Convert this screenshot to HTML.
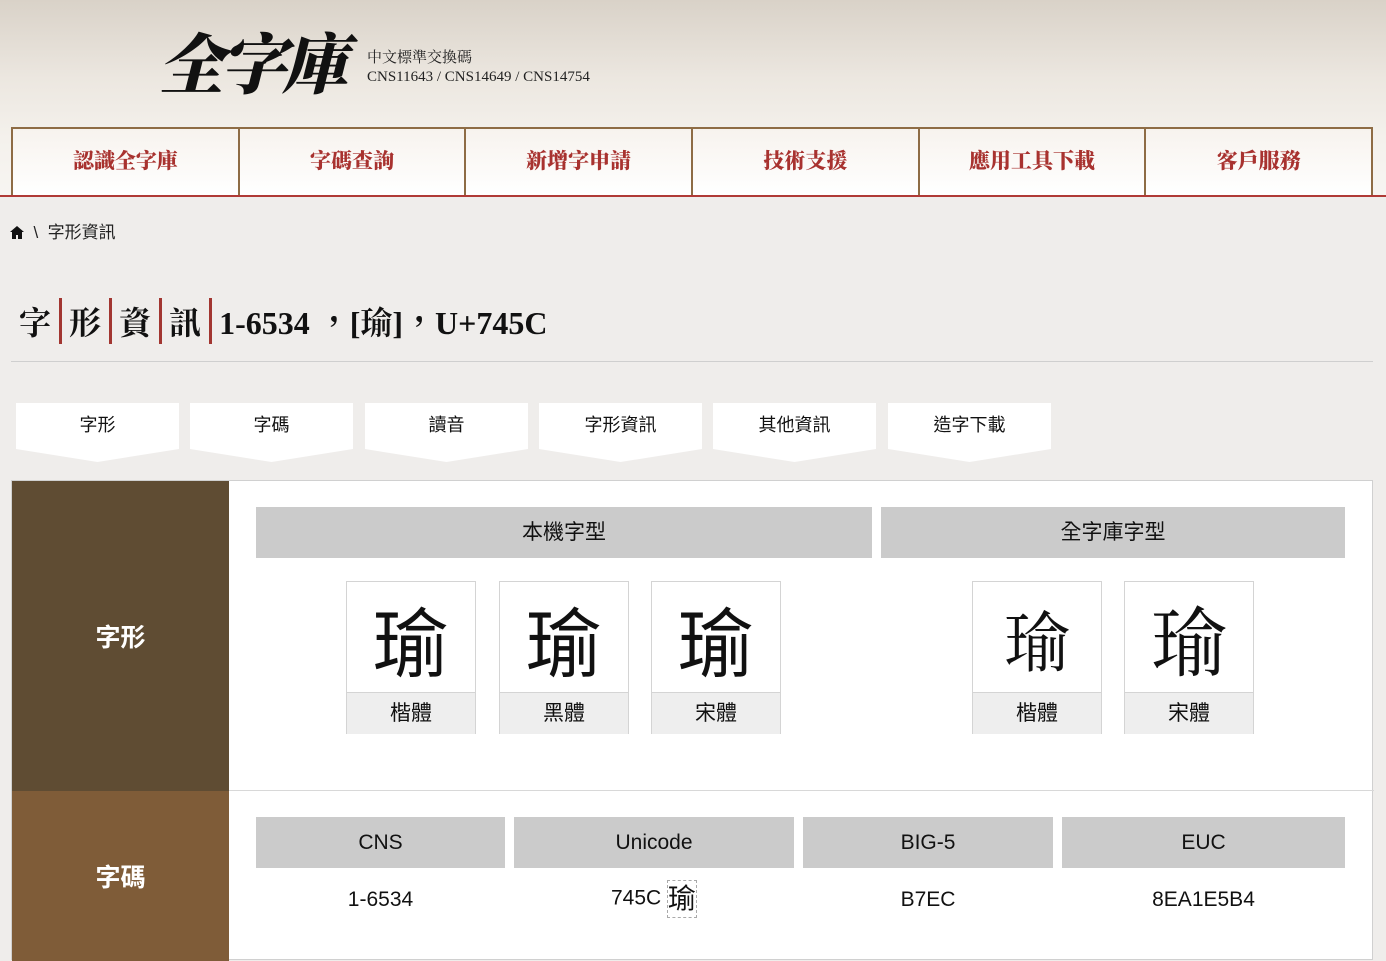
<!DOCTYPE html>
<html><head><meta charset="utf-8"><style>
*{margin:0;padding:0;box-sizing:border-box}
body{width:1386px;height:951px;overflow:hidden;background:#efedeb;font-family:"Liberation Sans","Noto Sans CJK TC",sans-serif;position:relative}
.hd{position:absolute;left:0;top:0;width:1386px;height:197px;background:linear-gradient(180deg,#d9d2c8 0%,#ece7e0 40%,#f4f1ec 70%,#f7f5f2 100%)}
.logo{position:absolute;left:158px;top:12px;font-family:"Noto Serif CJK SC",serif;font-size:66px;font-weight:900;color:#111;letter-spacing:-4px;font-style:italic}
.sub{position:absolute;left:367px;top:49px;font-family:"Liberation Serif","Noto Serif CJK SC",serif;font-size:15px;color:#222;line-height:19px}
.redl{position:absolute;left:0;top:195px;width:1386px;height:2px;background:#b03a36}
.nav{position:absolute;left:11px;top:127px;width:1362px;height:68px;display:flex}
.nav div{flex:1;border:2px solid #8e6c45;border-bottom:none;margin-left:-2px;background:linear-gradient(#f7f3ee,#fff);color:#a8322f;font-family:"Noto Serif CJK SC",serif;font-weight:900;font-size:21px;text-align:center;line-height:62px}
.nav div:first-child{margin-left:0}
.bc{position:absolute;left:10px;top:218px;font-size:17px;color:#222}
.tt{position:absolute;left:19px;top:298px;font-family:"Liberation Serif","Noto Serif CJK TC",serif;font-weight:bold;font-size:32px;color:#111;display:flex;align-items:center}
.tt span.b{display:inline-block;width:3px;height:46px;background:#a23631;margin:0 7px 0 8px}
.hr{position:absolute;left:11px;top:361px;width:1362px;height:1px;background:#cfcfcf}
.tab{position:absolute;top:403px;width:163px;height:59px;background:#fff;clip-path:polygon(0 0,100% 0,100% 78%,50% 100%,0 78%);text-align:center;font-size:18px;line-height:44px;color:#111}
.tbl{position:absolute;left:11px;top:480px;width:1362px;height:480px;background:#fff;border:1px solid #d0d0d0}
.lc{position:absolute;left:0;width:217px;color:#fff;font-weight:bold;font-size:25px;display:flex;align-items:center;justify-content:center}
.gh{position:absolute;background:#cbcbcb;height:51px;line-height:51px;text-align:center;font-size:21px;color:#111}
.gb{position:absolute;top:581px;width:130px;height:153px;border:1px solid #d4d4d4;background:#fff}
.gb .c{height:110px;text-align:center;font-size:76px;line-height:112px;font-family:"Noto Sans CJK TC",sans-serif;color:#111}
.gb .k{font-family:"Noto Serif CJK SC",serif}
.gb .l{height:42px;background:#eee;border-top:1px solid #d4d4d4;text-align:center;line-height:42px;font-size:21px;color:#111}
.v{position:absolute;top:888px;font-size:21px;color:#111;text-align:center}
</style></head><body>
<div class="hd"></div>
<div class="logo">全字庫</div>
<div class="sub">中文標準交換碼<br>CNS11643 / CNS14649 / CNS14754</div>
<div class="nav"><div>認識全字庫</div><div>字碼查詢</div><div>新增字申請</div><div>技術支援</div><div>應用工具下載</div><div>客戶服務</div></div>
<div class="redl"></div>
<div class="bc"><svg width="14" height="13" viewBox="0 0 14 13" style="vertical-align:-1px"><path d="M7 0L0 6h2v7h4V9h2v4h4V6h2z" fill="#111"/></svg> &nbsp;\ &nbsp;字形資訊</div>
<div class="tt">字<span class="b"></span>形<span class="b"></span>資<span class="b"></span>訊<span class="b"></span>1-6534 ，[瑜]，U+745C</div>
<div class="hr"></div>
<div class="tab" style="left:16px">字形</div>
<div class="tab" style="left:190px">字碼</div>
<div class="tab" style="left:365px">讀音</div>
<div class="tab" style="left:539px">字形資訊</div>
<div class="tab" style="left:713px">其他資訊</div>
<div class="tab" style="left:888px">造字下載</div>
<div class="tbl">
<div class="lc" style="top:0;height:310px;background:#5f4c33">字形</div>
<div class="lc" style="top:310px;height:170px;background:#7f5c38">字碼</div>
<div style="position:absolute;left:217px;top:309px;width:1145px;height:1px;background:#d8d8d8"></div>
</div>
<div class="gh" style="left:256px;top:507px;width:616px">本機字型</div>
<div class="gh" style="left:881px;top:507px;width:464px">全字庫字型</div>
<div class="gb" style="left:346px"><div class="c">瑜</div><div class="l">楷體</div></div>
<div class="gb" style="left:499px"><div class="c">瑜</div><div class="l">黑體</div></div>
<div class="gb" style="left:651px"><div class="c">瑜</div><div class="l">宋體</div></div>
<div class="gb" style="left:972px"><div class="c k" style="font-size:66px">瑜</div><div class="l">楷體</div></div>
<div class="gb" style="left:1124px"><div class="c" style="font-family:'Noto Serif CJK SC',serif">瑜</div><div class="l">宋體</div></div>
<div class="gh" style="left:256px;top:817px;width:249px">CNS</div>
<div class="gh" style="left:514px;top:817px;width:280px">Unicode</div>
<div class="gh" style="left:803px;top:817px;width:250px">BIG-5</div>
<div class="gh" style="left:1062px;top:817px;width:283px">EUC</div>
<div class="v" style="left:256px;width:249px">1-6534</div>
<div class="v" style="left:514px;width:280px;top:880px">745C <span style="display:inline-block;border:1px dashed #aaa;font-size:28px;line-height:36px;vertical-align:middle">瑜</span></div>
<div class="v" style="left:803px;width:250px">B7EC</div>
<div class="v" style="left:1062px;width:283px">8EA1E5B4</div>
</body></html>
